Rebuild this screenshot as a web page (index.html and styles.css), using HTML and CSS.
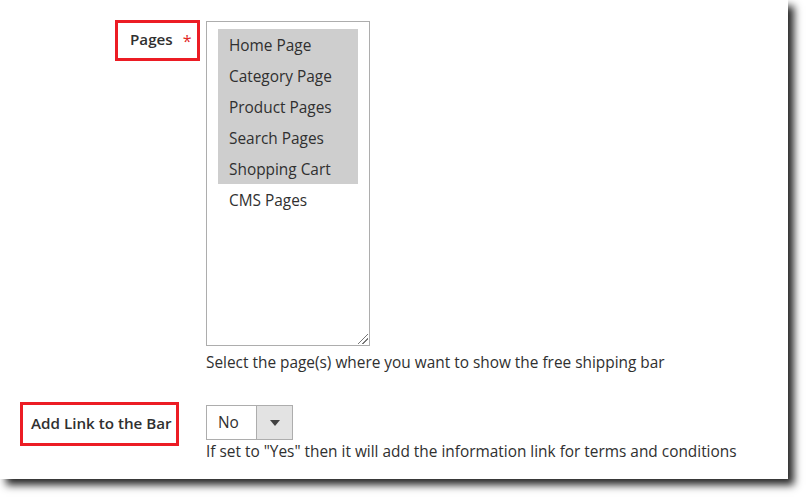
FILE: index.html
```html
<!DOCTYPE html>
<html>
<head>
<meta charset="utf-8">
<link rel="stylesheet" href="styles.css">
</head>
<body>
<div class="page">
<div class="card">
  <div class="field field-pages">
    <div class="label-col">
      <div class="mark mark-pages"><span class="label">Pages</span><span class="req">*</span></div>
    </div>
    <div class="control-col">
      <div class="multiselect">
        <div class="opt sel">Home Page</div>
        <div class="opt sel">Category Page</div>
        <div class="opt sel">Product Pages</div>
        <div class="opt sel">Search Pages</div>
        <div class="opt sel">Shopping Cart</div>
        <div class="opt">CMS Pages</div>
        <span class="grip"></span>
      </div>
      <div class="note note-pages">Select the page(s) where you want to show the free shipping bar</div>
    </div>
  </div>
  <div class="field field-link">
    <div class="label-col">
      <div class="mark mark-link"><span class="label">Add Link to the Bar</span></div>
    </div>
    <div class="control-col">
      <div class="select">
        <span class="select-value">No</span>
        <span class="select-arrow"><span class="tri"></span></span>
      </div>
      <div class="note note-link">If set to "Yes" then it will add the information link for terms and conditions</div>
    </div>
  </div>
</div>
</div>
</body>
</html>
```
FILE: styles.css
```css
html, body {
  margin: 0;
  padding: 0;
  background: #ffffff;
}
body {
  font-family: "Open Sans", "Liberation Sans", sans-serif;
  font-size: 15.4px;
  color: #303030;
}
.page {
  width: 806px;
  height: 497px;
  overflow: hidden;
}
.card {
  width: 788px;
  height: 479px;
  background: #ffffff;
  box-shadow: 6px 6px 8px rgba(0, 0, 0, 0.85);
  box-sizing: border-box;
  padding-top: 20px;
}
.field {
  display: grid;
  grid-template-columns: 206px auto;
}
.label-col {
  display: flex;
  justify-content: flex-end;
  align-items: flex-start;
}
.mark {
  border: 3px solid #ec1c24;
  box-sizing: border-box;
  display: flex;
  align-items: center;
}
.label {
  font-weight: 600;
  font-size: 15.2px;
  color: #303030;
  white-space: nowrap;
}
.mark-pages {
  width: 85px;
  height: 41px;
  margin-right: 6px;
  padding-left: 12px;
  padding-bottom: 3px;
}
.req {
  color: #e22626;
  font-size: 16px;
  margin-left: 10px;
  margin-top: 3px;
}
.mark-link {
  width: 159px;
  height: 44px;
  margin-right: 27px;
  padding-left: 8px;
  padding-bottom: 2px;
}
.control-col {
  display: flex;
  flex-direction: column;
  align-items: flex-start;
}
.multiselect {
  position: relative;
  margin-top: 1px;
  width: 164px;
  height: 325px;
  box-sizing: border-box;
  border: 1px solid #adadad;
  padding: 7px 11px;
}
.opt {
  height: 31px;
  line-height: 33px;
  padding-left: 11px;
  color: #303030;
  white-space: nowrap;
}
.opt.sel {
  background: #cecece;
}
.grip {
  position: absolute;
  right: 1px;
  bottom: 1px;
  width: 10px;
  height: 10px;
  background:
    linear-gradient(135deg, transparent 0 46%, #777 46% 54%, transparent 54% 68%, #777 68% 76%, transparent 76%);
}
.note {
  font-size: 15.4px;
  line-height: 18px;
  color: #303030;
  white-space: nowrap;
}
.note-pages {
  margin-top: 8px;
}
.field-link {
  margin-top: 30px;
}
.select {
  margin-top: 3px;
  width: 87px;
  height: 35px;
  box-sizing: border-box;
  border: 1px solid #adadad;
  display: flex;
}
.select-value {
  width: 49px;
  padding-left: 11px;
  box-sizing: border-box;
  line-height: 34px;
  color: #303030;
}
.select-arrow {
  flex: 1;
  border-left: 1px solid #adadad;
  background: #e3e3e3;
  display: flex;
  align-items: center;
  justify-content: center;
}
.tri {
  width: 0;
  height: 0;
  border-left: 5px solid transparent;
  border-right: 5px solid transparent;
  border-top: 6px solid #414141;
  margin-top: 1px;
}
.note-link {
  margin-top: 3px;
}
```
